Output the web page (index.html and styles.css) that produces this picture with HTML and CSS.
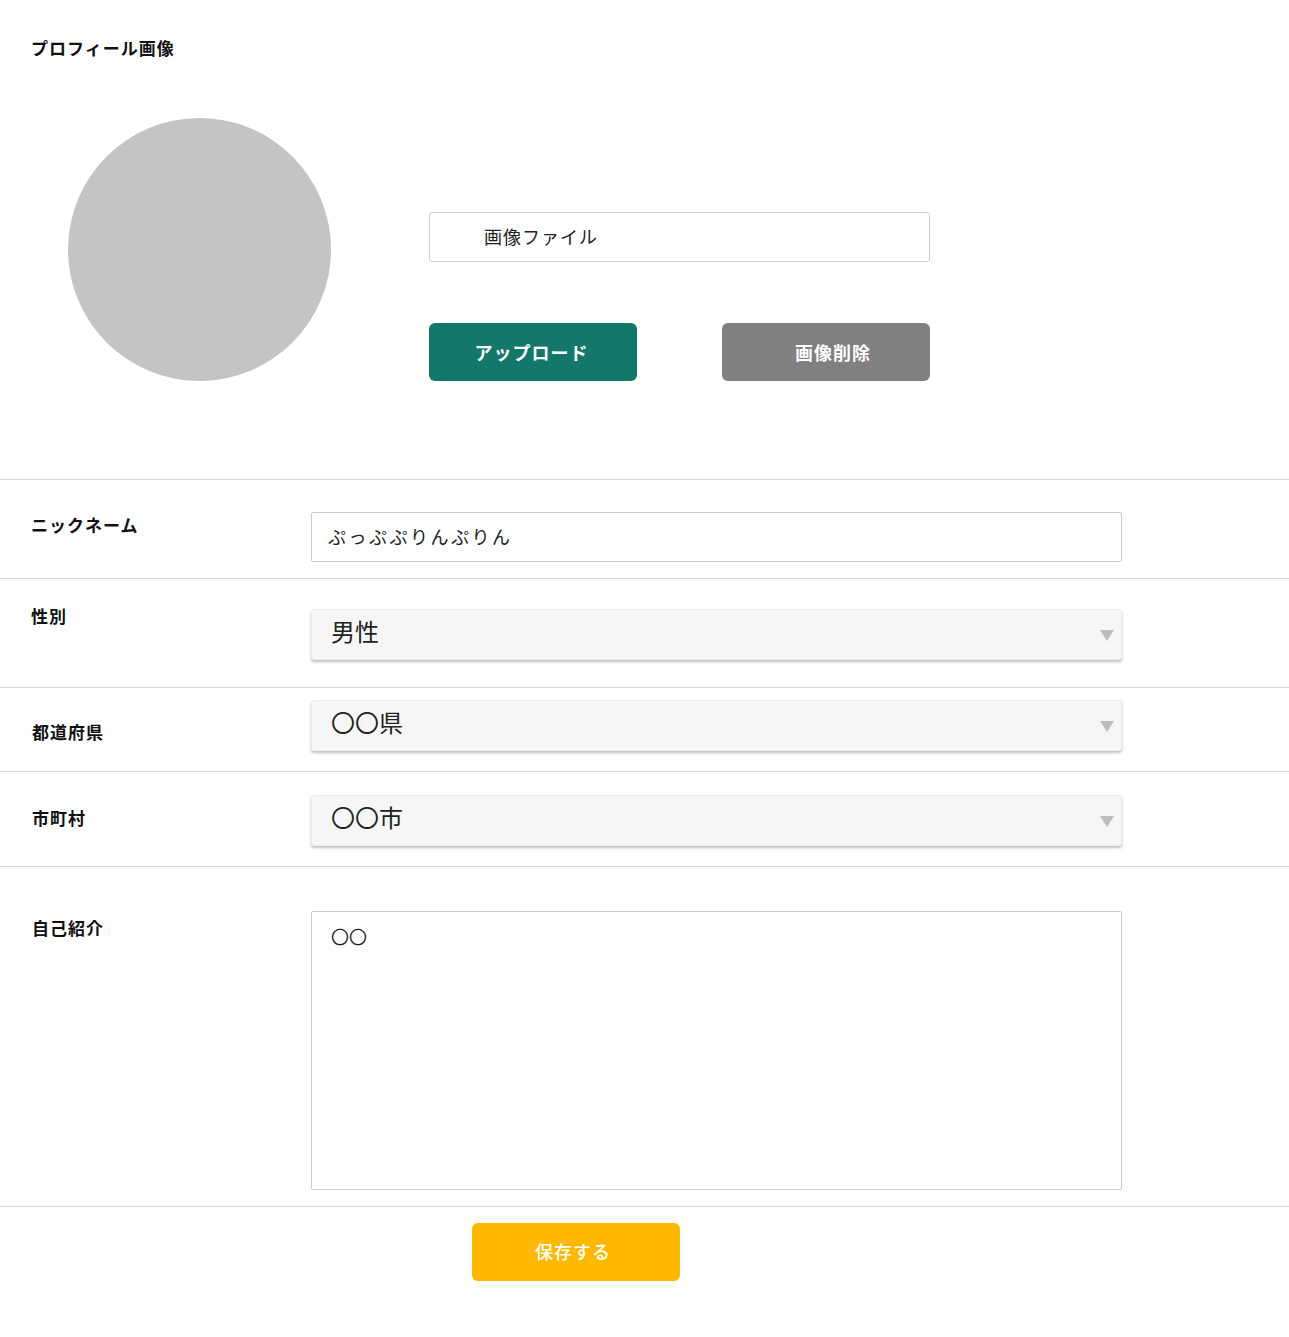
FILE: index.html
```html
<!DOCTYPE html>
<html lang="ja">
<head>
<meta charset="utf-8">
<title>プロフィール編集</title>
<link rel="stylesheet" href="styles.css">
</head>
<body>
<main class="page">
  <section class="profile">
    <h2 class="profile-title">プロフィール画像</h2>
    <div class="profile-body">
      <div class="avatar"></div>
      <div class="profile-actions">
        <div class="file-box">画像ファイル</div>
        <div class="btn-row">
          <button class="btn btn-upload">アップロード</button>
          <button class="btn btn-delete">画像削除</button>
        </div>
      </div>
    </div>
  </section>

  <div class="row row-nick">
    <label class="row-label">ニックネーム</label>
    <div class="row-field">
      <input class="text-input" type="text" value="ぷっぷぷりんぷりん">
    </div>
  </div>

  <div class="row row-gender">
    <label class="row-label">性別</label>
    <div class="row-field">
      <div class="select-wrap">
        <select class="select"><option>男性</option><option>女性</option></select>
      </div>
    </div>
  </div>

  <div class="row row-pref">
    <label class="row-label row-label-shift">都道府県</label>
    <div class="row-field">
      <div class="select-wrap">
        <select class="select"><option>〇〇県</option></select>
      </div>
    </div>
  </div>

  <div class="row row-city">
    <label class="row-label row-label-shift">市町村</label>
    <div class="row-field">
      <div class="select-wrap">
        <select class="select"><option>〇〇市</option></select>
      </div>
    </div>
  </div>

  <div class="row row-intro">
    <label class="row-label row-label-shift">自己紹介</label>
    <div class="row-field">
      <textarea class="textarea">〇〇</textarea>
    </div>
  </div>

  <div class="save-area">
    <button class="btn btn-save">保存する</button>
  </div>
</main>
</body>
</html>
```

FILE: styles.css
```css
* {
  box-sizing: border-box;
}

html, body {
  margin: 0;
  padding: 0;
  background: #ffffff;
}

body {
  font-family: "Noto Sans CJK JP", "Noto Sans", sans-serif;
  color: #222222;
}

.page {
  width: 1289px;
  min-height: 1337px;
}

/* profile image section */
.profile {
  padding: 37px 0 98px 31px;
  border-bottom: 1px solid #d6d6d6;
}

.profile-title {
  margin: 0;
  font-size: 17px;
  line-height: 22px;
  font-weight: 700;
  letter-spacing: 1px;
  color: #111111;
}

.profile-body {
  display: flex;
  align-items: flex-start;
  margin-top: 59px;
  padding-left: 37px;
}

.avatar {
  width: 263px;
  height: 263px;
  border-radius: 50%;
  background: #c4c4c4;
  flex: none;
}

.profile-actions {
  margin-left: 98px;
  margin-top: 94px;
  width: 501px;
}

.file-box {
  height: 50px;
  border: 1px solid #cfcfcf;
  border-radius: 3px;
  padding-left: 54px;
  font-size: 18px;
  line-height: 47px;
  letter-spacing: 1px;
  color: #222222;
}

.btn-row {
  display: flex;
  justify-content: space-between;
  margin-top: 61px;
}

.btn {
  width: 208px;
  height: 58px;
  border: none;
  border-radius: 6px;
  color: #ffffff;
  font-family: "Noto Sans CJK JP", "Noto Sans", sans-serif;
  font-size: 18px;
  font-weight: 700;
  letter-spacing: 1px;
  padding: 0;
  cursor: pointer;
}

.btn-upload {
  background: #13786a;
  padding-right: 3px;
}

.btn-delete {
  background: #808080;
  padding-left: 14px;
}

.btn-save {
  background: #ffb800;
  font-weight: 500;
  padding-right: 6px;
  padding-bottom: 2px;
}

/* form rows */
.row {
  display: flex;
  align-items: flex-start;
  border-bottom: 1px solid #d6d6d6;
}

.row-label {
  width: 311px;
  flex: none;
  padding-left: 31px;
  font-size: 17px;
  line-height: 27px;
  font-weight: 700;
  letter-spacing: 1px;
  color: #111111;
}

.row-label-shift {
  padding-left: 32px;
}

.row-field {
  width: 811px;
  flex: none;
}

.row-nick { padding-bottom: 16px; }
.row-nick .row-label { margin-top: 31px; }
.row-nick .row-field { margin-top: 32px; }

.row-gender { padding-bottom: 27px; }
.row-gender .row-label { margin-top: 23px; }
.row-gender .row-field { margin-top: 30px; }

.row-pref { padding-bottom: 20px; }
.row-pref .row-label { margin-top: 30px; }
.row-pref .row-field { margin-top: 12px; }

.row-city { padding-bottom: 20px; }
.row-city .row-label { margin-top: 32px; }
.row-city .row-field { margin-top: 23px; }

.row-intro { padding-bottom: 16px; }
.row-intro .row-label { margin-top: 47px; }
.row-intro .row-field { margin-top: 44px; }

.text-input {
  display: block;
  width: 100%;
  height: 50px;
  border: 1px solid #cccccc;
  border-radius: 2px;
  padding: 0 16px 2px;
  font-family: "Noto Sans CJK JP", "Noto Sans", sans-serif;
  font-size: 18px;
  letter-spacing: 2.5px;
  color: #222222;
  background: #ffffff;
  outline: none;
}

.select-wrap {
  position: relative;
  height: 51px;
}

.select-wrap::after {
  content: "";
  position: absolute;
  right: 8px;
  top: 21px;
  border-left: 7px solid transparent;
  border-right: 7px solid transparent;
  border-top: 11px solid #bcbcbc;
  pointer-events: none;
}

.select {
  display: block;
  width: 100%;
  height: 51px;
  -webkit-appearance: none;
  appearance: none;
  border: 1px solid #efeee6;
  border-radius: 3px;
  background: #f6f6f6;
  box-shadow: 0 2px 3px rgba(0, 0, 0, 0.25);
  padding: 0 40px 9px 19px;
  font-family: "Noto Sans CJK JP", "Noto Sans", sans-serif;
  font-size: 24px;
  color: #222222;
  outline: none;
}

.textarea {
  display: block;
  width: 100%;
  height: 279px;
  border: 1px solid #cccccc;
  border-radius: 2px;
  padding: 11px 19px;
  font-family: "Noto Sans CJK JP", "Noto Sans", sans-serif;
  font-size: 18px;
  line-height: 27px;
  color: #222222;
  resize: none;
  outline: none;
}

.save-area {
  padding: 16px 0 56px 472px;
}
```
